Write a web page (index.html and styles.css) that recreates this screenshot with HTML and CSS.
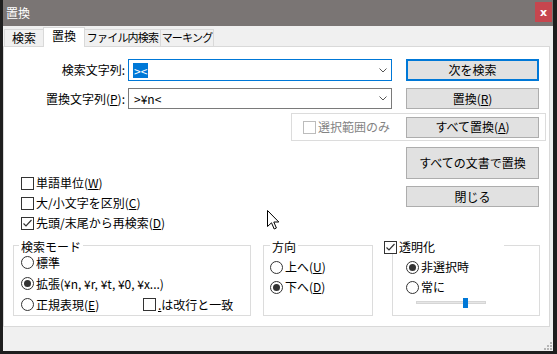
FILE: index.html
```html
<!DOCTYPE html>
<html lang="ja">
<head>
    <meta charset="UTF-8">
    <title>置換</title>
    <link rel="stylesheet" href="styles.css">
</head>
<body>
    <div class="window">
        <div class="titlebar">
            <span class="title">置換</span>
            <span class="close">x</span>
        </div>

        <div class="tabs">
            <div class="tab t1">検索</div>
            <div class="tab t2 active">置換</div>
            <div class="tab t3 narrow">ファイル内検索</div>
            <div class="tab t4 narrow">マーキング</div>
        </div>

        <div class="panel">
            <div class="field-row first">
                <label class="field-label">検索文字列:</label>
                <div class="combo focus">
                    <span class="sel">&gt;&lt;</span>
                    <svg class="chev" width="8" height="5" viewBox="0 0 8 5"><polyline points="0.5,0.5 4,4 7.5,0.5" fill="none" stroke="#555" stroke-width="1"/></svg>
                </div>
                <button class="btn default">次を検索</button>
            </div>
            <div class="field-row second">
                <label class="field-label">置換文字列(<u>P</u>):</label>
                <div class="combo">
                    <span class="val">&gt;¥n&lt;</span>
                    <svg class="chev" width="8" height="5" viewBox="0 0 8 5"><polyline points="0.5,0.5 4,4 7.5,0.5" fill="none" stroke="#555" stroke-width="1"/></svg>
                </div>
                <button class="btn">置換(<u>R</u>)</button>
            </div>

            <div class="scope">
                <div class="check disabled"><span class="box"></span>選択範囲のみ</div>
                <button class="btn">すべて置換(<u>A</u>)</button>
            </div>

            <div class="lower">
                <div class="options">
                    <div class="check"><span class="box"></span>単語単位(<u>W</u>)</div>
                    <div class="check"><span class="box"></span>大/小文字を区別(<u>C</u>)</div>
                    <div class="check"><span class="box"><svg width="11" height="11" viewBox="0 0 11 11"><polyline points="1.5,5.5 4,8 9.5,2" fill="none" stroke="#333" stroke-width="1.2"/></svg></span>先頭/末尾から再検索(<u>D</u>)</div>
                </div>
                <div class="actions">
                    <button class="btn tall">すべての文書で置換</button>
                    <button class="btn">閉じる</button>
                </div>
            </div>

            <div class="groups">
                <div class="group mode">
                    <span class="group-title">検索モード</span>
                    <div class="radio"><span class="dot"></span>標準</div>
                    <div class="radio on"><span class="dot"></span>拡張(¥n, ¥r, ¥t, ¥0, ¥x...)</div>
                    <div class="radio-line">
                        <div class="radio wide"><span class="dot"></span>正規表現(<u>E</u>)</div>
                        <div class="check"><span class="box"></span><u>.</u>は改行と一致</div>
                    </div>
                </div>
                <div class="group dir">
                    <span class="group-title">方向</span>
                    <div class="radio"><span class="dot"></span>上へ(<u>U</u>)</div>
                    <div class="radio on"><span class="dot"></span>下へ(<u>D</u>)</div>
                </div>
                <div class="group alpha">
                    <span class="group-title check-title"><span class="box"><svg width="11" height="11" viewBox="0 0 11 11"><polyline points="1.5,5.5 4,8 9.5,2" fill="none" stroke="#333" stroke-width="1.2"/></svg></span>透明化</span>
                    <div class="radio on"><span class="dot"></span>非選択時</div>
                    <div class="radio"><span class="dot"></span>常に</div>
                    <div class="slider"><span class="thumb"></span></div>
                </div>
            </div>
        </div>

        <svg class="grip" width="9" height="9" viewBox="0 0 9 9">
            <rect x="7" y="1" width="2" height="2" fill="#b5b5b5"/>
            <rect x="4" y="4" width="2" height="2" fill="#b5b5b5"/>
            <rect x="7" y="4" width="2" height="2" fill="#b5b5b5"/>
            <rect x="1" y="7" width="2" height="2" fill="#b5b5b5"/>
            <rect x="4" y="7" width="2" height="2" fill="#b5b5b5"/>
            <rect x="7" y="7" width="2" height="2" fill="#b5b5b5"/>
        </svg>
    </div>

    <svg class="cursor" width="13" height="21" viewBox="0 0 13 21">
        <path d="M0.5,0.5 L0.5,16.5 L4.5,12.8 L7.2,19 L9.4,18 L6.8,12 L11.8,12 Z" fill="#fff" stroke="#000" stroke-width="1" stroke-linejoin="miter"/>
    </svg>
</body>
</html>
```

FILE: styles.css
```css
body {
  margin: 0;
  background-color: #1e1e1e;
  font-family: "Noto Sans CJK JP", "Noto Sans", sans-serif;
  font-size: 12px;
  color: #000;
  overflow: hidden;
}

u {
  text-decoration: underline;
}

.window {
  position: relative;
  width: 550px;
  height: 351px;
  margin-left: 3px;
  background-color: #f0f0f0;
  display: flex;
  flex-direction: column;
}

/* title bar */
.titlebar {
  flex: none;
  height: 26px;
  background-color: #7a7574;
  color: #fff;
  display: flex;
  justify-content: space-between;
  align-items: flex-start;
}

.title {
  padding: 5px 0 0 3px;
  line-height: 16px;
}

.close {
  width: 17px;
  height: 20px;
  margin: 2px 1px 0 0;
  background-color: #c6464e;
  display: flex;
  align-items: center;
  justify-content: center;
  font: bold 11px "DejaVu Sans", sans-serif;
}

/* tabs */
.tabs {
  flex: none;
  height: 20px;
  padding-left: 1px;
  display: flex;
  align-items: flex-end;
}

.tab {
  flex: none;
  height: 17px;
  box-sizing: border-box;
  border: 1px solid #d9d9d9;
  border-bottom: none;
  background-color: #f0f0f0;
  text-align: center;
  line-height: 15px;
  margin-left: -1px;
  white-space: nowrap;
  overflow: hidden;
}

.tab.narrow {
  font-size: 11px;
  letter-spacing: -0.8px;
}

.tab.t1 { width: 40px; margin-left: 0; }
.tab.t2 { width: 42px; }
.tab.t3 { width: 77px; }
.tab.t4 { width: 54px; }

.tab.active {
  height: 20px;
  margin-bottom: -1px;
  background-color: #fff;
  position: relative;
  z-index: 1;
  line-height: 16px;
}

/* panel */
.panel {
  flex: none;
  height: 281px;
  box-sizing: border-box;
  border: 1px solid #d9d9d9;
  background-color: #fff;
  margin-right: 3px;
  display: flex;
  flex-direction: column;
}

.field-row {
  display: flex;
  align-items: center;
}

.field-row.first { margin-top: 12px; }
.field-row.second { margin-top: 7px; }

.field-label {
  width: 121px;
  margin-right: 3px;
  text-align: right;
  line-height: 14px;
}

.combo {
  width: 264px;
  height: 22px;
  box-sizing: border-box;
  border: 1px solid #7a7a7a;
  padding: 0 4px 0 4px;
  display: flex;
  align-items: center;
  justify-content: space-between;
  line-height: 14px;
}

.combo.focus {
  border-color: #0078d7;
}

.sel {
  background-color: #0078d7;
  color: #fff;
  padding: 0 1px;
  line-height: 15px;
}

.val {
  padding-left: 1px;
}

.btn {
  width: 133px;
  height: 22px;
  margin-left: 14px;
  box-sizing: border-box;
  border: 1px solid #adadad;
  background-color: #e1e1e1;
  font: inherit;
  color: #000;
  padding: 0;
  line-height: 14px;
}

.btn.default {
  border: 2px solid #0078d7;
}

.field-row.second .combo,
.field-row.second .btn {
  height: 21px;
}

/* "selection only" box */
.scope {
  width: 255px;
  height: 28px;
  margin: 4px 0 0 287px;
  box-sizing: border-box;
  border: 1px solid #dcdcdc;
  padding: 0 6px 0 11px;
  display: flex;
  align-items: center;
}

.scope .btn {
  margin-left: auto;
  height: 21px;
}

/* checkboxes */
.check {
  display: flex;
  align-items: center;
  height: 20px;
  line-height: 14px;
}

.box {
  flex: none;
  width: 13px;
  height: 13px;
  box-sizing: border-box;
  border: 1px solid #333;
  background-color: #fff;
  margin-right: 2px;
  display: flex;
  align-items: center;
  justify-content: center;
}

.check.disabled {
  color: #838383;
}

.check.disabled .box {
  border-color: #bcbcbc;
}

.lower {
  display: flex;
  margin-top: 6px;
}

.options {
  padding: 26px 0 0 17px;
}

.actions {
  margin-left: auto;
  margin-right: 10px;
  display: flex;
  flex-direction: column;
  gap: 7px;
}

.actions .btn {
  margin-left: 0;
  height: 21px;
}

.actions .btn.tall {
  height: 32px;
}

/* group boxes */
.groups {
  display: flex;
  margin: auto 0 10px 9px;
}

.group {
  position: relative;
  height: 71px;
  box-sizing: border-box;
  border: 1px solid #dcdcdc;
}

.group-title {
  position: absolute;
  top: -6px;
  left: 5px;
  padding: 0 2px;
  background-color: #fff;
  line-height: 14px;
}

.mode {
  width: 238px;
  padding: 6px 0 0 7px;
}

.dir {
  width: 110px;
  margin-left: 12px;
  padding: 11px 0 0 6px;
}

.dir .group-title {
  left: 6px;
}

.alpha {
  width: 148px;
  margin-left: 19px;
  padding: 11px 0 0 13px;
}

.check-title {
  left: -9px;
  width: 120px;
  padding: 0;
  display: flex;
  align-items: center;
}

.radio {
  display: flex;
  align-items: center;
  height: 21px;
  line-height: 14px;
}

.dir .radio,
.alpha .radio {
  height: 20px;
}

.radio-line {
  display: flex;
  align-items: center;
}

.radio.wide {
  width: 122px;
}

.dot {
  flex: none;
  width: 13px;
  height: 13px;
  box-sizing: border-box;
  border: 1px solid #333;
  border-radius: 50%;
  background-color: #fff;
  margin-right: 2px;
  display: flex;
  align-items: center;
  justify-content: center;
}

.radio.on .dot::after {
  content: "";
  width: 7px;
  height: 7px;
  border-radius: 50%;
  background-color: #333;
}

.slider {
  position: relative;
  width: 70px;
  height: 3px;
  margin: 4px 0 0 10px;
  background-color: #e6e6e6;
  border: 1px solid #d6d6d6;
  box-sizing: border-box;
}

.thumb {
  position: absolute;
  left: 46px;
  top: -4px;
  width: 5px;
  height: 10px;
  background-color: #0078d7;
}

.grip {
  position: absolute;
  right: 1px;
  bottom: 1px;
}

.cursor {
  position: absolute;
  left: 267px;
  top: 210px;
}
```
